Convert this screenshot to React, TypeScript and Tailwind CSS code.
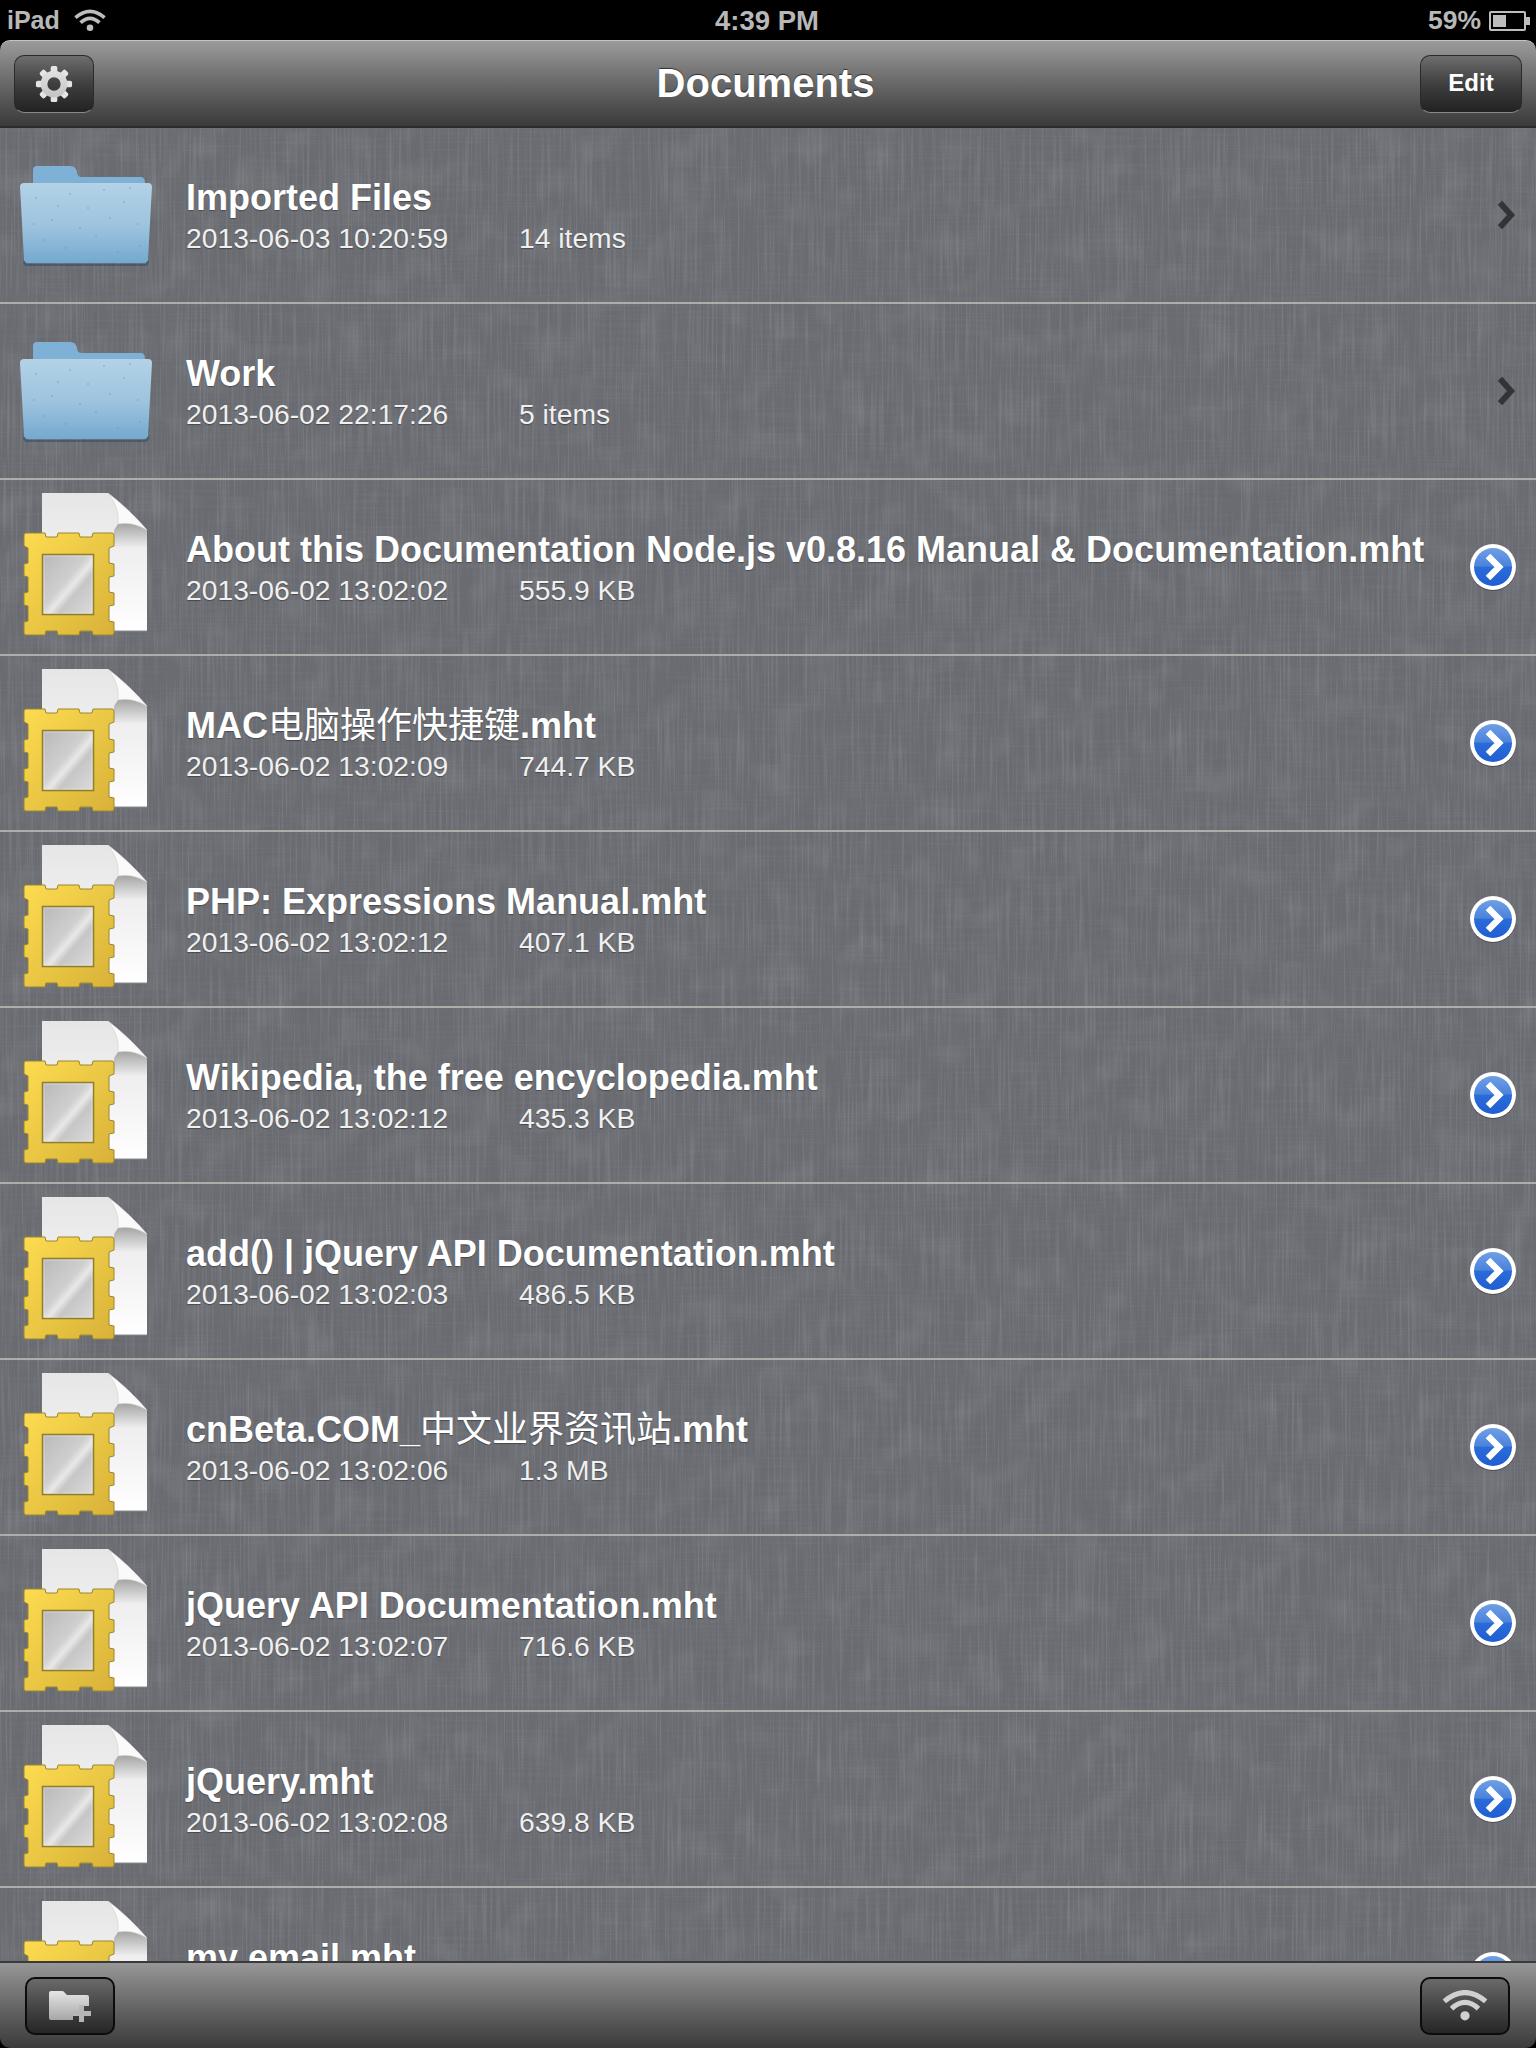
import React from 'react';

const SANS = 'font-["Liberation_Sans","Noto_Sans_CJK_SC",sans-serif]';

interface Item {
  kind: 'folder' | 'file';
  name: React.ReactNode;
  date: string;
  meta: string;
}

const cjk = (text: string) => <span className="font-normal">{text}</span>;

const items: Item[] = [
  { kind: 'folder', name: 'Imported Files', date: '2013-06-03 10:20:59', meta: '14 items' },
  { kind: 'folder', name: 'Work', date: '2013-06-02 22:17:26', meta: '5 items' },
  { kind: 'file', name: 'About this Documentation Node.js v0.8.16 Manual & Documentation.mht', date: '2013-06-02 13:02:02', meta: '555.9 KB' },
  { kind: 'file', name: <>MAC{cjk('电脑操作快捷键')}.mht</>, date: '2013-06-02 13:02:09', meta: '744.7 KB' },
  { kind: 'file', name: 'PHP: Expressions Manual.mht', date: '2013-06-02 13:02:12', meta: '407.1 KB' },
  { kind: 'file', name: 'Wikipedia, the free encyclopedia.mht', date: '2013-06-02 13:02:12', meta: '435.3 KB' },
  { kind: 'file', name: 'add() | jQuery API Documentation.mht', date: '2013-06-02 13:02:03', meta: '486.5 KB' },
  { kind: 'file', name: <>cnBeta.COM_{cjk('中文业界资讯站')}.mht</>, date: '2013-06-02 13:02:06', meta: '1.3 MB' },
  { kind: 'file', name: 'jQuery API Documentation.mht', date: '2013-06-02 13:02:07', meta: '716.6 KB' },
  { kind: 'file', name: 'jQuery.mht', date: '2013-06-02 13:02:08', meta: '639.8 KB' },
  // cut off by the toolbar, its date line never shows
  { kind: 'file', name: 'my email.mht', date: '', meta: '' },
];

const specks = [
  [36, 70], [52, 92], [70, 66], [88, 80], [104, 62], [124, 74], [138, 96], [44, 112], [66, 120],
  [96, 108], [118, 124], [130, 60], [58, 78], [80, 100], [110, 90], [34, 96], [140, 118],
];

function FolderIcon() {
  return (
    <svg viewBox="0 0 186 174" className="w-[186px] h-[174px] shrink-0">
      <defs>
        <linearGradient id="folderFront" x1="0" y1="0" x2="0" y2="1">
          <stop offset="0" stopColor="#b3d2e6" />
          <stop offset="0.55" stopColor="#9cc3de" />
          <stop offset="1" stopColor="#74a9d0" />
        </linearGradient>
      </defs>
      <path d="M33 54 V42 q0 -4 4 -4 H70 q6 0 7 6 q0 5 5 5 H141 q4 0 4 6 V60 H33 Z" fill="#7fb0d6" />
      <path d="M20 59 q0 -4 4 -4 H148 q4 0 4 4 L148 131 q0 4 -4 4 H28 q-4 0 -4 -4 Z" fill="url(#folderFront)" />
      <path d="M24 133 q0 4 4 4 H144 q4 0 4 -4" fill="none" stroke="#2f4a60" strokeOpacity="0.55" strokeWidth="2" />
      {specks.map(([x, y], i) => (
        <circle key={i} cx={x} cy={y} r="0.8" fill="#5f93ba" fillOpacity="0.7" />
      ))}
    </svg>
  );
}

function FileIcon() {
  return (
    <svg viewBox="0 0 186 174" className="w-[186px] h-[174px] shrink-0">
      <defs>
        <linearGradient id="pageFill" x1="0" y1="0" x2="0" y2="1">
          <stop offset="0" stopColor="#e6e6e6" />
          <stop offset="0.55" stopColor="#f2f2f2" />
          <stop offset="1" stopColor="#ffffff" />
        </linearGradient>
        <linearGradient id="foldShade" x1="0" y1="0" x2="0" y2="1">
          <stop offset="0" stopColor="#000000" stopOpacity="0.3" />
          <stop offset="1" stopColor="#000000" stopOpacity="0" />
        </linearGradient>
        <linearGradient id="stampFill" x1="0" y1="0" x2="1" y2="1">
          <stop offset="0" stopColor="#fcdc50" />
          <stop offset="1" stopColor="#d8b238" />
        </linearGradient>
        <linearGradient id="glassFill" x1="0" y1="0" x2="1" y2="1">
          <stop offset="0" stopColor="#b9b9b9" />
          <stop offset="0.45" stopColor="#cfcfcf" />
          <stop offset="0.55" stopColor="#e8e8e8" />
          <stop offset="0.65" stopColor="#c6c6c6" />
          <stop offset="1" stopColor="#dcdcdc" />
        </linearGradient>
      </defs>
      <path d="M42 13 H108 Q130 30 147 50 V151 H42 Z" fill="url(#pageFill)" />
      <path d="M147 151 H60" stroke="#8a8a8a" strokeWidth="1" />
      <path d="M118 44 Q132 41 147 50 V68 H114 V50 Z" fill="url(#foldShade)" />
      <path d="M108 13 Q130 30 147 50 Q132 41 118 44 Q120 28 108 13 Z" fill="#fafafa" stroke="#cfcfcf" strokeWidth="0.6" />
      <path
        d="M26 53 H45 L46 57 H57 L58 53 H79 L80 57 H92 L93 53 H112 Q114 53 114 55 V66 L109 68 V83 L114 84 V96 L109 97 V112 L114 113 V125 L109 126 V141 L114 142 V153 Q114 155 112 155 H93 L92 151 H80 L79 155 H58 L57 151 H46 L45 155 H26 Q24 155 24 153 V142 L28 141 V126 L24 125 V113 L28 112 V97 L24 96 V84 L28 83 V68 L24 66 V55 Q24 53 26 53 Z"
        fill="url(#stampFill)"
        stroke="#9a8630"
        strokeWidth="1"
        strokeLinejoin="round"
      />
      <rect x="42.5" y="74.5" width="51" height="60" fill="url(#glassFill)" stroke="#94802c" strokeWidth="1.6" />
      <rect x="44" y="76" width="48" height="57" fill="none" stroke="#ffffff" strokeOpacity="0.35" strokeWidth="1" />
    </svg>
  );
}

function Accessory({ kind }: { kind: Item['kind'] }) {
  return (
    <svg viewBox="0 0 76 174" className="w-[76px] h-[174px] shrink-0">
      <defs>
        <linearGradient id="discFill" x1="0" y1="0" x2="0" y2="1">
          <stop offset="0" stopColor="#6f9fe6" />
          <stop offset="0.48" stopColor="#4a83dc" />
          <stop offset="0.5" stopColor="#2c6ad8" />
          <stop offset="1" stopColor="#1f5fd2" />
        </linearGradient>
      </defs>
      {kind === 'folder' ? (
        <path d="M42 77 L51 87 L42 97" fill="none" stroke="#333437" strokeWidth="6" strokeLinecap="square" strokeLinejoin="miter" />
      ) : (
        <>
          <circle cx="33" cy="88" r="23" fill="#000000" fillOpacity="0.3" />
          <circle cx="33" cy="87" r="23" fill="#ffffff" />
          <circle cx="33" cy="87" r="19" fill="url(#discFill)" />
          <path d="M28 76 L39 87 L28 98" fill="none" stroke="#ffffff" strokeWidth="6.5" strokeLinejoin="miter" />
        </>
      )}
    </svg>
  );
}

function Row({ item }: { item: Item }) {
  return (
    <div className="flex h-[176px] border-b-2 border-[#adadac] shrink-0">
      {item.kind === 'folder' ? <FolderIcon /> : <FileIcon />}
      <div className="flex-1 min-w-0 pt-[50px] text-white [text-shadow:0_1px_1px_rgba(0,0,0,0.35)]">
        <div className="text-[36px] leading-[40px] font-bold whitespace-nowrap">{item.name}</div>
        <div className="flex mt-[4px] text-[28.25px] leading-[32px] text-[#f0f0f0]">
          <span className="w-[333px]">{item.date}</span>
          <span>{item.meta}</span>
        </div>
      </div>
      <Accessory kind={item.kind} />
    </div>
  );
}

function WifiIcon({ className, color }: { className: string; color: string }) {
  return (
    <svg viewBox="0 0 44 30" className={className}>
      <path d="M2 11 Q22 -6 42 11" fill="none" stroke={color} strokeWidth="5" />
      <path d="M9 18 Q22 6 35 18" fill="none" stroke={color} strokeWidth="5" />
      <circle cx="22" cy="25" r="4.5" fill={color} />
    </svg>
  );
}

function GearIcon() {
  const teeth = [0, 45, 90, 135, 180, 225, 270, 315];
  return (
    <svg viewBox="0 0 40 40" className="w-[38px] h-[38px]">
      <defs>
        <linearGradient id="gearFill" x1="0" y1="0" x2="0" y2="40" gradientUnits="userSpaceOnUse">
          <stop offset="0" stopColor="#e8e8e8" />
          <stop offset="1" stopColor="#bdbdbd" />
        </linearGradient>
      </defs>
      <g fill="url(#gearFill)">
        {teeth.map((deg) => (
          <rect key={deg} x="16.5" y="1" width="7" height="9" rx="2" transform={`rotate(${deg} 20 20)`} />
        ))}
      </g>
      <path
        fillRule="evenodd"
        fill="url(#gearFill)"
        d="M20 6 a14 14 0 1 0 0 28 a14 14 0 1 0 0 -28 Z M20 13 a7 7 0 1 1 0 14 a7 7 0 1 1 0 -14 Z"
      />
    </svg>
  );
}

function NavButton({ className, children }: { className: string; children: React.ReactNode }) {
  return (
    <div
      className={`flex items-center justify-center h-[58px] rounded-[10px] border border-[#2a2a2a] border-b-[#8a8a8a] bg-gradient-to-b from-[#6e6e6e] via-[#3f3f3f] to-[#222222] ${className}`}
    >
      {children}
    </div>
  );
}

function ToolButton({ children }: { children: React.ReactNode }) {
  return (
    <div className="flex items-center justify-center w-[90px] h-[58px] rounded-[10px] border-2 border-[#0c0c0c] bg-gradient-to-b from-[#6a6a6a] to-[#262626]">
      {children}
    </div>
  );
}

function Linen() {
  return (
    <svg className="absolute inset-0 w-full h-full" aria-hidden="true">
      <defs>
        <filter id="threadsV" x="0" y="0" width="100%" height="100%">
          <feTurbulence type="fractalNoise" baseFrequency="0.5 0.012" numOctaves="2" seed="4" />
          <feColorMatrix values="0 0 0 0 0.85  0 0 0 0 0.87  0 0 0 0 0.92  1.8 0 0 0 -0.8" />
        </filter>
        <filter id="threadsH" x="0" y="0" width="100%" height="100%">
          <feTurbulence type="fractalNoise" baseFrequency="0.012 0.5" numOctaves="2" seed="9" />
          <feColorMatrix values="0 0 0 0 0.25  0 0 0 0 0.27  0 0 0 0 0.31  1.8 0 0 0 -0.8" />
        </filter>
        <filter id="blotches" x="0" y="0" width="100%" height="100%">
          <feTurbulence type="fractalNoise" baseFrequency="0.03" numOctaves="2" seed="2" />
          <feColorMatrix values="0 0 0 0 0.42  0 0 0 0 0.45  0 0 0 0 0.42  1.6 0 0 0 -0.75" />
        </filter>
      </defs>
      <rect width="100%" height="100%" filter="url(#threadsV)" opacity="0.16" />
      <rect width="100%" height="100%" filter="url(#threadsH)" opacity="0.18" />
      <rect width="100%" height="100%" filter="url(#blotches)" opacity="0.2" />
    </svg>
  );
}

export default function App() {
  return (
    <div className={`flex flex-col w-[1536px] h-[2048px] overflow-hidden bg-black ${SANS}`}>
      {/* status bar */}
      <div className="grid grid-cols-3 items-center h-[40px] pl-[7px] pr-[6px] font-bold text-[26.5px] text-[#b8b8b8] shrink-0">
        <div className="flex items-center gap-[14px]">
          <span className="text-[25px]">iPad</span>
          <WifiIcon className="w-[32px] h-[23px]" color="#bdbdbd" />
        </div>
        <span className="text-center text-[27.5px] pr-[3px]">4:39 PM</span>
        <div className="flex items-center justify-end gap-[8px]">
          <span>59%</span>
          <div className="flex items-center">
            <div className="w-[37px] h-[20px] border-2 border-[#bdbdbd] rounded-[2px] p-[2px]">
              <div className="w-[44%] h-full bg-[#bdbdbd]" />
            </div>
            <div className="w-[4px] h-[8px] bg-[#bdbdbd]" />
          </div>
        </div>
      </div>

      {/* nav bar */}
      <div className="relative flex items-center justify-between h-[88px] pl-[14px] pr-[14px] shrink-0 rounded-t-[10px] border-t border-[#c4c4c4] border-b-2 border-b-[#2b2b2b] bg-gradient-to-b from-[#9b9b9b] to-[#3a3a3a]">
        <NavButton className="w-[80px]">
          <GearIcon />
        </NavButton>
        <div className="absolute inset-x-0 pr-[5px] pb-[2px] text-center pointer-events-none text-[40px] font-bold text-white [text-shadow:0_-1px_1px_rgba(0,0,0,0.6)]">
          Documents
        </div>
        <NavButton className="w-[102px] pb-[2px] text-[24px] font-bold text-white">Edit</NavButton>
      </div>

      {/* file list */}
      <div className="relative flex-1 min-h-0 overflow-hidden bg-[#696b71]">
        <Linen />
        <div className="relative flex flex-col">
          {items.map((item, i) => (
            <Row key={i} item={item} />
          ))}
        </div>
      </div>

      {/* toolbar */}
      <div className="flex items-center justify-between h-[87px] pl-[25px] pr-[26px] shrink-0 rounded-b-[10px] border-t-2 border-[#3a3a3a] bg-gradient-to-b from-[#979797] to-[#3b3b3b]">
        <ToolButton>
          <svg viewBox="0 0 44 32" className="w-[44px] h-[32px]">
            <defs>
              <linearGradient id="tbFolder" x1="0" y1="0" x2="0" y2="1">
                <stop offset="0" stopColor="#e6e6e6" />
                <stop offset="1" stopColor="#a6a6a6" />
              </linearGradient>
            </defs>
            <path d="M1 3 q0 -2 2 -2 H14 q2 0 3 2 l2 2 H39 q2 0 2 2 V16 H31 V22 H25 V30 H3 q-2 0 -2 -2 Z" fill="url(#tbFolder)" />
            <path d="M31 18 H36 V24 H43 V29 H36 V35 H31 V29 H25 V24 H31 Z" fill="#b5b5b5" transform="translate(0 -3)" />
          </svg>
        </ToolButton>
        <ToolButton>
          <WifiIcon className="w-[46px] h-[31px]" color="#d0d0d0" />
        </ToolButton>
      </div>
    </div>
  );
}
